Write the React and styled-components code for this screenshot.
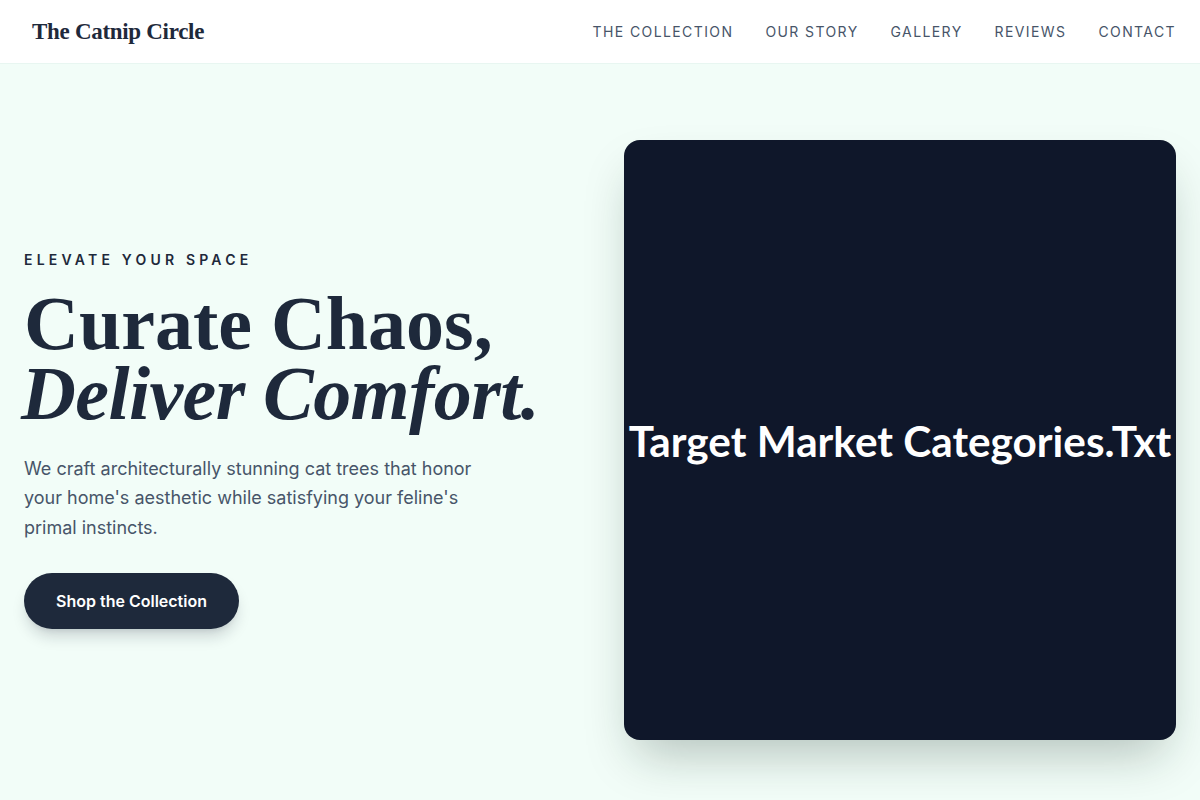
import React from 'react'
import styled, { createGlobalStyle } from 'styled-components'

const GlobalStyle = createGlobalStyle`
    * {
        box-sizing: border-box;
    }

    body {
        margin: 0;
        background: #f2fdf8;
        font-family: Inter, "Noto Sans", sans-serif;
        color: #1e293b;
    }
`

const Header = styled.header`
    display: flex;
    align-items: center;
    justify-content: space-between;
    height: 64px;
    padding: 0 24px 0 32px;
    background: #ffffff;
    border-bottom: 1px solid #e8f6f1;
`

const Logo = styled.div`
    font-family: "Liberation Serif", "Times New Roman", serif;
    font-weight: 700;
    font-size: 23px;
    letter-spacing: -0.3px;
    color: #1e293b;
`

const Nav = styled.nav`
    display: flex;
    gap: 32px;
`

const NavLink = styled.a`
    font-size: 14px;
    letter-spacing: 0.1em;
    text-transform: uppercase;
    color: #475569;
    text-decoration: none;
    cursor: pointer;
`

const Hero = styled.section`
    display: grid;
    grid-template-columns: 1fr 1fr;
    gap: 48px;
    align-items: center;
    padding: 76px 24px;
`

const Copy = styled.div`
    display: flex;
    flex-direction: column;
    align-items: flex-start;
`

const Eyebrow = styled.span`
    font-size: 14px;
    font-weight: 600;
    letter-spacing: 0.3em;
    text-transform: uppercase;
    color: #1e293b;
    margin-bottom: 20px;
`

const Title = styled.h1`
    font-family: "Liberation Serif", "Times New Roman", serif;
    font-weight: 700;
    font-size: 76px;
    line-height: 70px;
    color: #1e293b;
    margin: 0 0 26px;

    em {
        display: block;
        font-style: italic;
        letter-spacing: -0.6px;
        margin-left: -3px;
    }
`

const Lead = styled.p`
    font-size: 18px;
    line-height: 29.5px;
    color: #475569;
    max-width: 460px;
    margin: 0 0 31px;
`

const Button = styled.button`
    height: 56px;
    padding: 0 32px;
    border: none;
    border-radius: 999px;
    background: #1e293b;
    color: #ffffff;
    font-family: Inter, sans-serif;
    font-size: 16px;
    font-weight: 600;
    box-shadow: 0 10px 15px -3px rgba(15, 23, 42, 0.18), 0 4px 6px -4px rgba(15, 23, 42, 0.12);
    cursor: pointer;
`

const Visual = styled.div`
    display: flex;
    align-items: center;
    justify-content: center;
    height: 600px;
    border-radius: 16px;
    background: #0f172a;
    box-shadow: 0 25px 50px -12px rgba(15, 40, 30, 0.28);
`

const Placeholder = styled.span`
    font-family: Lato, "Noto Sans", sans-serif;
    font-weight: 700;
    font-size: 42.3px;
    color: #ffffff;
    white-space: nowrap;
`

const navItems = ['The Collection', 'Our Story', 'Gallery', 'Reviews', 'Contact']

const App = () => {
    return (
        <>
            <GlobalStyle />
            <Header>
                <Logo>The Catnip Circle</Logo>
                <Nav>
                    {navItems.map(item => (
                        <NavLink key={item}>{item}</NavLink>
                    ))}
                </Nav>
            </Header>
            <Hero>
                <Copy>
                    <Eyebrow>Elevate your space</Eyebrow>
                    <Title>
                        Curate Chaos,
                        <em>Deliver Comfort.</em>
                    </Title>
                    <Lead>
                        We craft architecturally stunning cat trees that honor your home's
                        aesthetic while satisfying your feline's primal instincts.
                    </Lead>
                    <Button>Shop the Collection</Button>
                </Copy>
                <Visual>
                    <Placeholder>Target Market Categories.Txt</Placeholder>
                </Visual>
            </Hero>
        </>
    )
}

export default App
